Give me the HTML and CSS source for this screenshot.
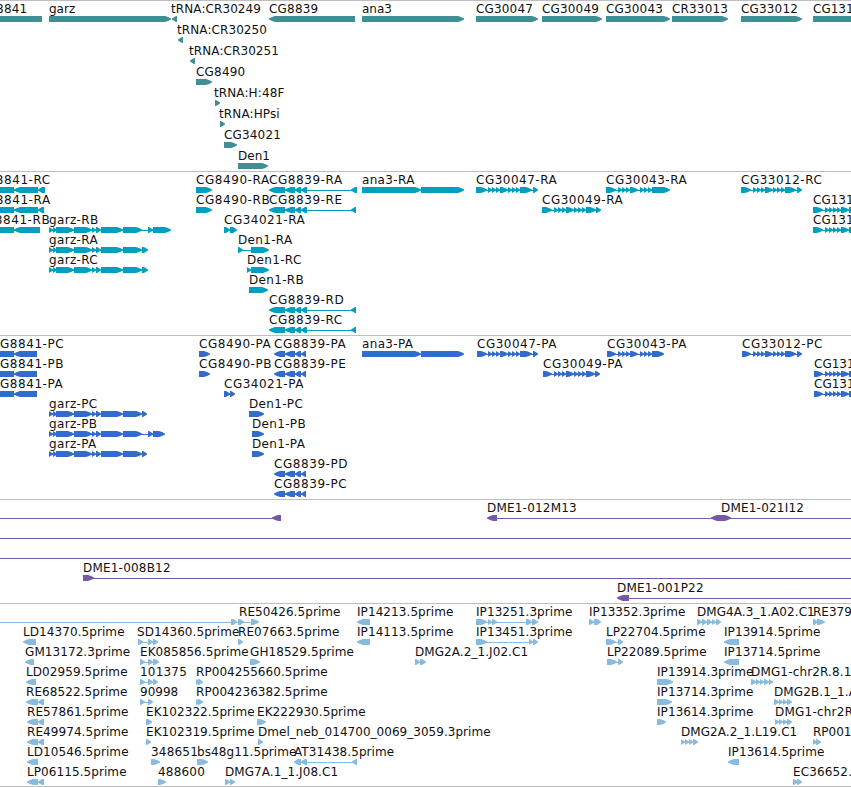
FILE: index.html
```html
<!DOCTYPE html>
<html lang="en">
<head>
    <meta charset="UTF-8">
    <title>Genome browser</title>
    <link rel="stylesheet" href="styles.css">
</head>
<body>
    <main class="browser">
        <svg class="track genes" id="genes"></svg>
        <svg class="track transcripts" id="transcripts"></svg>
        <svg class="track proteins" id="proteins"></svg>
        <svg class="track bacs" id="bacs"></svg>
        <svg class="track ests" id="ests"></svg>
    </main>
    <script src="tracks.js"></script>
</body>
</html>
```
FILE: styles.css
```css
body {
    margin: 0;
    background: #fff;
}
.browser {
    display: flex;
    flex-direction: column;
    height: 787px;
    overflow: hidden;
    box-sizing: border-box;
    border-bottom: 1px solid #bebebe;
}
.track {
    display: block;
    flex: none;
    width: 100%;
    box-sizing: border-box;
    border-top: 1px solid #bebebe;
    overflow: hidden;
}
.track text {
    font-family: "DejaVu Sans", sans-serif;
    font-size: 12px;
    fill: #111;
    white-space: pre;
}
.genes { height: 171px; color: #3f8f95; }
.transcripts { height: 164px; color: #009fc0; }
.proteins { height: 164px; color: #316bcc; }
.bacs { height: 104px; color: #7758a7; }
.ests { height: 183px; color: #88bbdd; }
.exon, .intron { fill: currentColor; }
```
FILE: tracks.js
```js
const SVG = 'http://www.w3.org/2000/svg';

// feature: [row, label, label x, strand, exons as start-end pairs]
const garz = [49,53, 53,57, 56,74, 74,92, 92,96, 96,101, 101,123, 123,142];

const genes = [
    [0, 'CG8841', -22, -1, [-30,42]],
    [0, 'garz', 49, 1, [49,171]],
    [0, 'tRNA:CR30249', 171, -1, [172,177]],
    [0, 'CG8839', 269, -1, [269,355]],
    [0, 'ana3', 362, 1, [362,464]],
    [0, 'CG30047', 476, 1, [476,538]],
    [0, 'CG30049', 542, 1, [542,602]],
    [0, 'CG30043', 606, 1, [606,670]],
    [0, 'CR33013', 672, 1, [672,728]],
    [0, 'CG33012', 741, 1, [741,802]],
    [0, 'CG131', 813, 1, [813,870]],
    [1, 'tRNA:CR30250', 177, -1, [178,183]],
    [2, 'tRNA:CR30251', 189, -1, [190,195]],
    [3, 'CG8490', 196, 1, [196,212]],
    [4, 'tRNA:H:48F', 214, 1, [215,220]],
    [5, 'tRNA:HPsi', 219, 1, [220,225]],
    [6, 'CG34021', 224, 1, [224,237]],
    [7, 'Den1', 238, 1, [238,268]]
];

const transcripts = [
    [0, 'CG8841-RC', -23, -1, [-30,14, 14,38, 38,45]],
    [1, 'CG8841-RA', -23, -1, [-30,14, 14,38, 38,44]],
    [2, 'CG8841-RB', -24, -1, [-30,14, 14,40]],
    [2, 'garz-RB', 49, 1, [...garz, 148,153, 153,171]],
    [3, 'garz-RA', 49, 1, [...garz, 142,148]],
    [4, 'garz-RC', 49, 1, [...garz, 142,148]],
    [0, 'CG8490-RA', 196, 1, [196,212]],
    [1, 'CG8490-RB', 196, 1, [196,212]],
    [0, 'CG8839-RA', 269, -1, [269,285, 285,295, 295,301, 301,307, 351,357]],
    [1, 'CG8839-RE', 269, -1, [269,285, 285,295, 295,301, 301,307, 351,356]],
    [2, 'CG34021-RA', 224, 1, [224,230, 230,237]],
    [3, 'Den1-RA', 238, 1, [238,243, 251,269]],
    [4, 'Den1-RC', 247, 1, [247,251, 251,269]],
    [5, 'Den1-RB', 249, 1, [249,268]],
    [6, 'CG8839-RD', 269, -1, [269,285, 285,295, 295,301, 301,307, 351,356]],
    [7, 'CG8839-RC', 269, -1, [269,285, 285,295, 295,301, 301,307, 351,356]],
    [0, 'ana3-RA', 362, 1, [362,421, 421,464]],
    [0, 'CG30047-RA', 476, 1, [476,487, 488,492, 492,496, 496,500, 500,508, 508,512, 512,516, 516,520, 520,532, 533,538]],
    [1, 'CG30049-RA', 542, 1, [542,552, 554,558, 558,562, 562,566, 566,574, 574,578, 578,582, 582,586, 586,596, 596,601]],
    [0, 'CG30043-RA', 606, 1, [606,616, 618,622, 622,626, 626,630, 630,638, 640,644, 644,648, 648,652, 652,670]],
    [0, 'CG33012-RC', 741, 1, [741,751, 753,757, 757,761, 761,765, 765,773, 773,777, 777,781, 781,785, 785,796, 797,802]],
    [1, 'CG131', 813, 1, [813,823, 825,829, 829,833, 833,837, 837,841, 841,849, 849,860]],
    [2, 'CG131', 813, 1, [813,823, 825,829, 829,833, 833,837, 837,841, 841,849, 849,860]]
];

const proteins = [
    [0, 'CG8841-PC', -9, -1, [-30,14, 14,37]],
    [1, 'CG8841-PB', -9, -1, [-30,14, 14,37]],
    [2, 'CG8841-PA', -9, -1, [-30,14, 14,37]],
    [3, 'garz-PC', 49, 1, [...garz, 142,147]],
    [4, 'garz-PB', 49, 1, [...garz, 148,153, 153,165]],
    [5, 'garz-PA', 49, 1, [...garz, 142,147]],
    [0, 'CG8490-PA', 199, 1, [199,210]],
    [1, 'CG8490-PB', 199, 1, [199,210]],
    [0, 'CG8839-PA', 274, -1, [274,285, 285,295, 295,301, 301,306]],
    [1, 'CG8839-PE', 274, -1, [274,285, 285,295, 295,301, 301,306]],
    [2, 'CG34021-PA', 224, 1, [224,230, 230,235]],
    [3, 'Den1-PC', 249, 1, [249,264]],
    [4, 'Den1-PB', 252, 1, [252,264]],
    [5, 'Den1-PA', 252, 1, [252,264]],
    [6, 'CG8839-PD', 274, -1, [274,285, 285,295, 295,301, 301,306]],
    [7, 'CG8839-PC', 274, -1, [274,285, 285,295, 295,301, 301,306]],
    [0, 'ana3-PA', 362, 1, [362,421, 421,464]],
    [0, 'CG30047-PA', 477, 1, [477,487, 488,492, 492,496, 496,500, 500,508, 508,512, 512,516, 516,520, 520,532, 533,538]],
    [1, 'CG30049-PA', 543, 1, [543,552, 554,558, 558,562, 562,566, 566,574, 574,578, 578,582, 582,586, 586,595, 595,600]],
    [0, 'CG30043-PA', 607, 1, [607,616, 618,622, 622,626, 626,630, 630,638, 640,644, 644,648, 648,652, 652,664]],
    [0, 'CG33012-PC', 742, 1, [742,751, 753,757, 757,761, 761,765, 765,773, 773,777, 777,781, 781,785, 785,796, 797,802]],
    [1, 'CG131', 814, 1, [814,823, 825,829, 829,833, 833,837, 837,841, 841,849, 849,860]],
    [2, 'CG131', 814, 1, [814,823, 825,829, 829,833, 833,837, 837,841, 841,849, 849,860]]
];

const bacs = [
    [0, '', 0, -1, [-20,-10, 272,281]],
    [0, 'DME1-012M13', 487, -1, [487,497, 711,722]],
    [0, 'DME1-021I12', 721, 1, [720,731, 870,880]],
    [1, '', 0, 1, [-20,-10, 870,880]],
    [2, '', 0, 1, [-20,-10, 870,880]],
    [3, 'DME1-008B12', 83, 1, [83,94, 870,880]],
    [4, 'DME1-001P22', 617, -1, [617,629, 870,880]]
];

const ests = [
    [0, 'RE50426.5prime', 239, 1, [-20,-10, 231,237, 238,244, 251,259]],
    [0, 'IP14213.5prime', 357, -1, [357,370]],
    [0, 'IP13251.3prime', 476, 1, [476,487, 488,492, 492,497, 526,532, 532,538]],
    [0, 'IP13352.3prime', 589, 1, [589,594, 594,601]],
    [0, 'DMG4A.3_1.A02.C1', 697, 1, [697,702, 702,707, 707,712, 712,716, 716,721]],
    [0, 'RE379', 813, 1, [813,818, 817,825]],
    [1, 'LD14370.5prime', 23, -1, [23,36]],
    [1, 'SD14360.5prime', 137, 1, [138,143, 148,153, 153,158]],
    [1, 'RE07663.5prime', 238, 1, [238,243]],
    [1, 'IP14113.5prime', 357, -1, [357,370]],
    [1, 'IP13451.3prime', 476, 1, [476,487, 529,533, 533,538]],
    [1, 'LP22704.5prime', 606, 1, [606,616, 618,623]],
    [1, 'IP13914.5prime', 724, -1, [724,739]],
    [2, 'GM13172.3prime', 25, -1, [25,34]],
    [2, 'EK085856.5prime', 140, 1, [140,145, 148,153, 153,159]],
    [2, 'GH18529.5prime', 250, 1, [250,260]],
    [2, 'DMG2A.2_1.J02.C1', 415, 1, [415,420, 420,426]],
    [2, 'LP22089.5prime', 607, 1, [607,617, 618,623]],
    [2, 'IP13714.5prime', 724, -1, [724,739]],
    [3, 'LD02959.5prime', 26, -1, [26,36]],
    [3, '101375', 140, 1, [140,145, 148,153, 153,158]],
    [3, 'RP004255660.5prime', 196, 1, [196,200, 198,203]],
    [3, 'IP13914.3prime', 657, 1, [657,673]],
    [3, 'DMG1-chr2R.8.1', 751, 1, [751,756, 756,760, 760,764, 764,769, 769,773]],
    [4, 'RE68522.5prime', 26, -1, [26,38, 38,44]],
    [4, '90998', 140, 1, [140,145, 148,153]],
    [4, 'RP004236382.5prime', 196, 1, [196,200, 198,203]],
    [4, 'IP13714.3prime', 657, 1, [657,672]],
    [4, 'DMG2B.1_1.A', 774, 1, [774,779, 779,783, 783,787, 787,792]],
    [5, 'RE57861.5prime', 27, -1, [27,38, 38,44]],
    [5, 'EK102322.5prime', 146, 1, [146,152]],
    [5, 'EK222930.5prime', 257, 1, [257,266]],
    [5, 'IP13614.3prime', 657, 1, [657,666]],
    [5, 'DMG1-chr2R', 775, 1, [775,779, 779,783, 783,787, 787,792]],
    [6, 'RE49974.5prime', 27, -1, [27,38, 38,44]],
    [6, 'EK102319.5prime', 146, 1, [146,151]],
    [6, 'Dmel_neb_014700_0069_3059.3prime', 258, 1, [258,263]],
    [6, 'DMG2A.2_1.L19.C1', 681, 1, [681,685, 685,689, 689,693, 693,698]],
    [6, 'RP001', 813, 1, [813,817, 816,821]],
    [7, 'LD10546.5prime', 27, -1, [27,38]],
    [7, '348651', 151, 1, [151,160]],
    [7, 'bs48g11.5prime', 197, 1, [197,208]],
    [7, 'AT31438.5prime', 294, -1, [294,301, 301,307, 352,357]],
    [7, 'IP13614.5prime', 728, -1, [728,739]],
    [8, 'LP06115.5prime', 27, -1, [27,38, 38,44]],
    [8, '488600', 158, 1, [158,166]],
    [8, 'DMG7A.1_1.J08.C1', 225, 1, [225,230, 230,235]],
    [8, 'EC36652.', 793, 1, [793,798, 797,802]]
];

function add(parent, name, attrs) {
    const el = document.createElementNS(SVG, name);
    for (const key in attrs) el.setAttribute(key, attrs[key]);
    parent.appendChild(el);
    return el;
}

// block with a pointed end, 6px high
function exon(svg, start, end, strand, y) {
    const size = end - start;
    const tip = size > 7 ? 6 : Math.min(4, size);
    const from = strand > 0 ? start : end;
    const to = strand > 0 ? end : start;
    const neck = to - strand * tip;
    let points = [[from, y], [neck, y]];
    if (size > 7) {
        // long blocks get a rounder tip
        const mid = to - strand * 3;
        points.push([mid, y + 1], [to, y + 2.5], [to, y + 3.5], [mid, y + 5]);
    } else {
        points.push([to, y + 2.5], [to, y + 3.5]);
    }
    points.push([neck, y + 6], [from, y + 6]);
    add(svg, 'polygon', { class: 'exon', points: points.join(' ') });
}

// extra tracking so that dashes and long names get room
function extraWidth(label) {
    if (/^CG\d+-/.test(label)) return 4.5;
    if (label.includes('-')) return 2;
    return label.length > 5 ? 1 : 0;
}

function drawLabel(svg, label, x, y) {
    const text = add(svg, 'text', { x: x, y: y });
    text.textContent = label;
    text.setAttribute('textLength', text.getComputedTextLength() + extraWidth(label));
}

function drawTrack(id, features, rowHeight) {
    const svg = document.getElementById(id);
    for (const [row, label, x, strand, exons] of features) {
        const top = row * rowHeight;
        add(svg, 'rect', {
            class: 'intron', x: exons[0] + 1, y: top + 18,
            width: exons[exons.length - 1] - exons[0] - 2, height: 1
        });
        for (let i = 0; i < exons.length; i += 2) {
            exon(svg, exons[i], exons[i + 1], strand, top + 15);
        }
        if (label) drawLabel(svg, label, x, top + 12);
    }
}

drawTrack('genes', genes, 21);
drawTrack('transcripts', transcripts, 20);
drawTrack('proteins', proteins, 20);
drawTrack('bacs', bacs, 20);
drawTrack('ests', ests, 20);
```
